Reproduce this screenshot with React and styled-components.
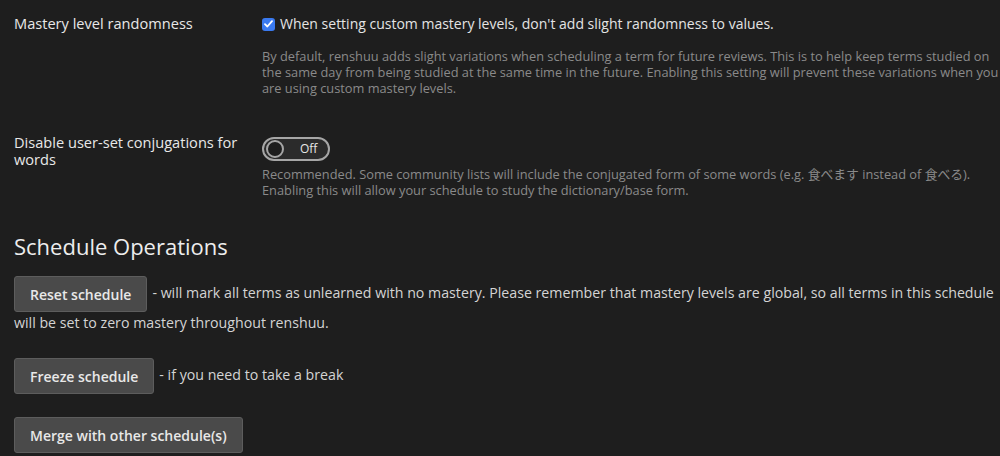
import React from "react";
import styled, { createGlobalStyle } from "styled-components";

const Global = createGlobalStyle`
  html, body {
    margin: 0;
    padding: 0;
    background: #1e1e1e;
    overflow: hidden;
  }
  body {
    font-family: "Open Sans", "Noto Sans CJK JP", sans-serif;
    color: #e6e6e6;
  }
`;

const Page = styled.div`
  width: 994px;
  padding: 15px 0 0 14px;
  min-height: 456px;
  box-sizing: content-box;
`;

const SettingRow = styled.div`
  display: grid;
  grid-template-columns: 236px 1fr;
  column-gap: 12px;
  align-items: start;
  margin-top: ${(p) => p.$top || 0}px;
`;

const Label = styled.div`
  font-size: 14.6px;
  line-height: 17px;
  color: #e8e8e8;
`;

const Control = styled.div`
  display: flex;
  flex-direction: column;
  align-items: flex-start;
`;

const CheckLine = styled.label`
  display: flex;
  align-items: center;
  gap: 5px;
  font-size: 14px;
  line-height: 17px;
  color: #e4e4e4;
`;

const CheckBox = styled.span`
  width: 13px;
  height: 13px;
  border-radius: 3px;
  background: #3a7af0;
  display: inline-flex;
  align-items: center;
  justify-content: center;
  margin-top: 1px;
  flex: none;
`;

const Description = styled.p`
  margin: ${(p) => p.$top || 0}px 0 0;
  font-size: 12.8px;
  line-height: 16px;
  color: #8a8a8a;
`;

const Switch = styled.button`
  margin-top: 3px;
  width: 68px;
  height: 24px;
  border: 2px solid #a6a6a6;
  border-radius: 12px;
  background: #2b2b2b;
  padding: 0 0 0 2px;
  display: flex;
  align-items: center;
  gap: 16px;
  box-sizing: border-box;
  font-family: inherit;
  cursor: pointer;
`;

const Knob = styled.span`
  width: 18px;
  height: 18px;
  border-radius: 50%;
  border: 2px solid #a6a6a6;
  background: #1e1e1e;
  box-sizing: border-box;
  flex: none;
`;

const SwitchText = styled.span`
  font-size: 12px;
  color: #e6e6e6;
  line-height: 1;
`;

const Heading = styled.h2`
  margin: 32px 0 0;
  font-size: 22px;
  font-weight: 400;
  line-height: 32px;
  color: #ededed;
`;

const OpLine = styled.p`
  margin: ${(p) => p.$top || 0}px 0 0;
  font-size: 14.2px;
  line-height: 22px;
  color: #d4d4d4;
`;

const OpButton = styled.button`
  display: inline-block;
  vertical-align: middle;
  height: 36px;
  padding: 0 15px;
  margin-right: 5px;
  background: #4a4a4a;
  border: 1px solid #5d5d5d;
  border-radius: 3px;
  color: #e8e8e8;
  font-family: inherit;
  font-size: 14px;
  font-weight: 600;
  cursor: pointer;
`;

export default function App() {
  return (
    <>
      <Global />
      <Page>
        <SettingRow>
          <Label>Mastery level randomness</Label>
          <Control>
            <CheckLine>
              <CheckBox>
                <svg width="9" height="8" viewBox="0 0 9 8">
                  <path d="M1 4.2 L3.4 6.5 L8 1.2" fill="none" stroke="#fff" strokeWidth="1.8" strokeLinecap="round" strokeLinejoin="round" />
                </svg>
              </CheckBox>
              When setting custom mastery levels, don't add slight randomness to values.
            </CheckLine>
            <Description $top={16}>
              By default, renshuu adds slight variations when scheduling a term for future reviews. This is to help keep terms studied on the same day from being studied at the same time in the future. Enabling this setting will prevent these variations when you are using custom mastery levels.
            </Description>
          </Control>
        </SettingRow>

        <SettingRow $top={38}>
          <Label>Disable user-set conjugations for words</Label>
          <Control>
            <Switch role="switch" aria-checked="false">
              <Knob />
              <SwitchText>Off</SwitchText>
            </Switch>
            <Description $top={5}>
              Recommended. Some community lists will include the conjugated form of some words (e.g. 食べます instead of 食べる). Enabling this will allow your schedule to study the dictionary/base form.
            </Description>
          </Control>
        </SettingRow>

        <Heading>Schedule Operations</Heading>

        <OpLine $top={14}>
          <OpButton>Reset schedule</OpButton>- will mark all terms as unlearned with no mastery. Please remember that mastery levels are global, so all terms in this schedule will be set to zero mastery throughout renshuu.
        </OpLine>

        <OpLine $top={24}>
          <OpButton>Freeze schedule</OpButton>- if you need to take a break
        </OpLine>

        <OpLine $top={23}>
          <OpButton>Merge with other schedule(s)</OpButton>
        </OpLine>
      </Page>
    </>
  );
}
